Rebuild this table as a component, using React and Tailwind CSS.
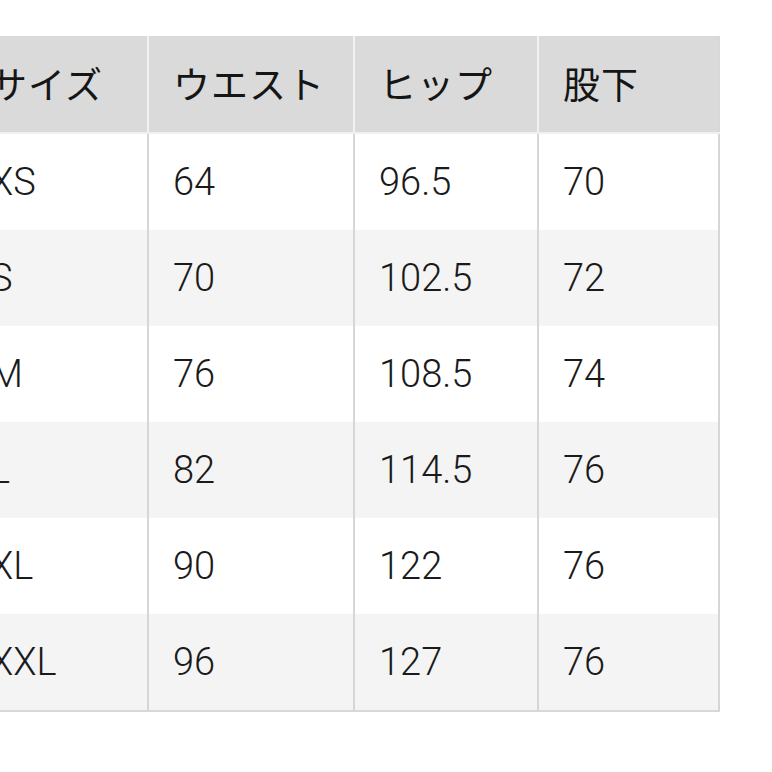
import React from "react";

const headers = ["サイズ", "ウエスト", "ヒップ", "股下"];
const rows = [
  ["XS", "64", "96.5", "70"],
  ["S", "70", "102.5", "72"],
  ["M", "76", "108.5", "74"],
  ["L", "82", "114.5", "76"],
  ["XL", "90", "122", "76"],
  ["XXL", "96", "127", "76"],
];

const widths = ["w-[183px]", "w-[206px]", "w-[184px]", "w-[181px]"];

export default function App() {
  return (
    <div
      className="w-[772px] h-[772px] bg-white overflow-hidden pt-[36px]"
      style={{ fontFamily: "Roboto, 'Noto Sans CJK JP', sans-serif" }}
    >
      <div className="ml-[-34px] w-[754px] flex flex-col border-b-2 border-[#d8d8d8]">
        <div className="flex h-[98px] bg-[#dadada] border-b-2 border-[#f0f0f0]">
          {headers.map((h, i) => (
            <div
              key={i}
              className={`${widths[i]} h-full flex items-center pl-[24px] ${
                i < 3 ? "border-r-2 border-[#f2f2f2]" : "border-r-2 border-[#d8d8d8]"
              } text-[37px] text-[#151515] tracking-[1px]`}
              style={{ fontFamily: "'Noto Sans CJK JP', sans-serif" }}
            >
              {h}
            </div>
          ))}
        </div>
        {rows.map((r, ri) => (
          <div
            key={ri}
            className={`flex h-[96px] ${ri % 2 === 1 ? "bg-[#f4f4f4]" : "bg-white"} ${ri === 0 ? "h-[94px]" : ""}`}
          >
            {r.map((c, ci) => (
              <div
                key={ci}
                className={`${widths[ci]} h-full flex items-center pl-[24px] border-r-2 border-[#d6d6d6] text-[38px] font-light text-[#1a1a1a]`}
              >
                {c}
              </div>
            ))}
          </div>
        ))}
      </div>
    </div>
  );
}
